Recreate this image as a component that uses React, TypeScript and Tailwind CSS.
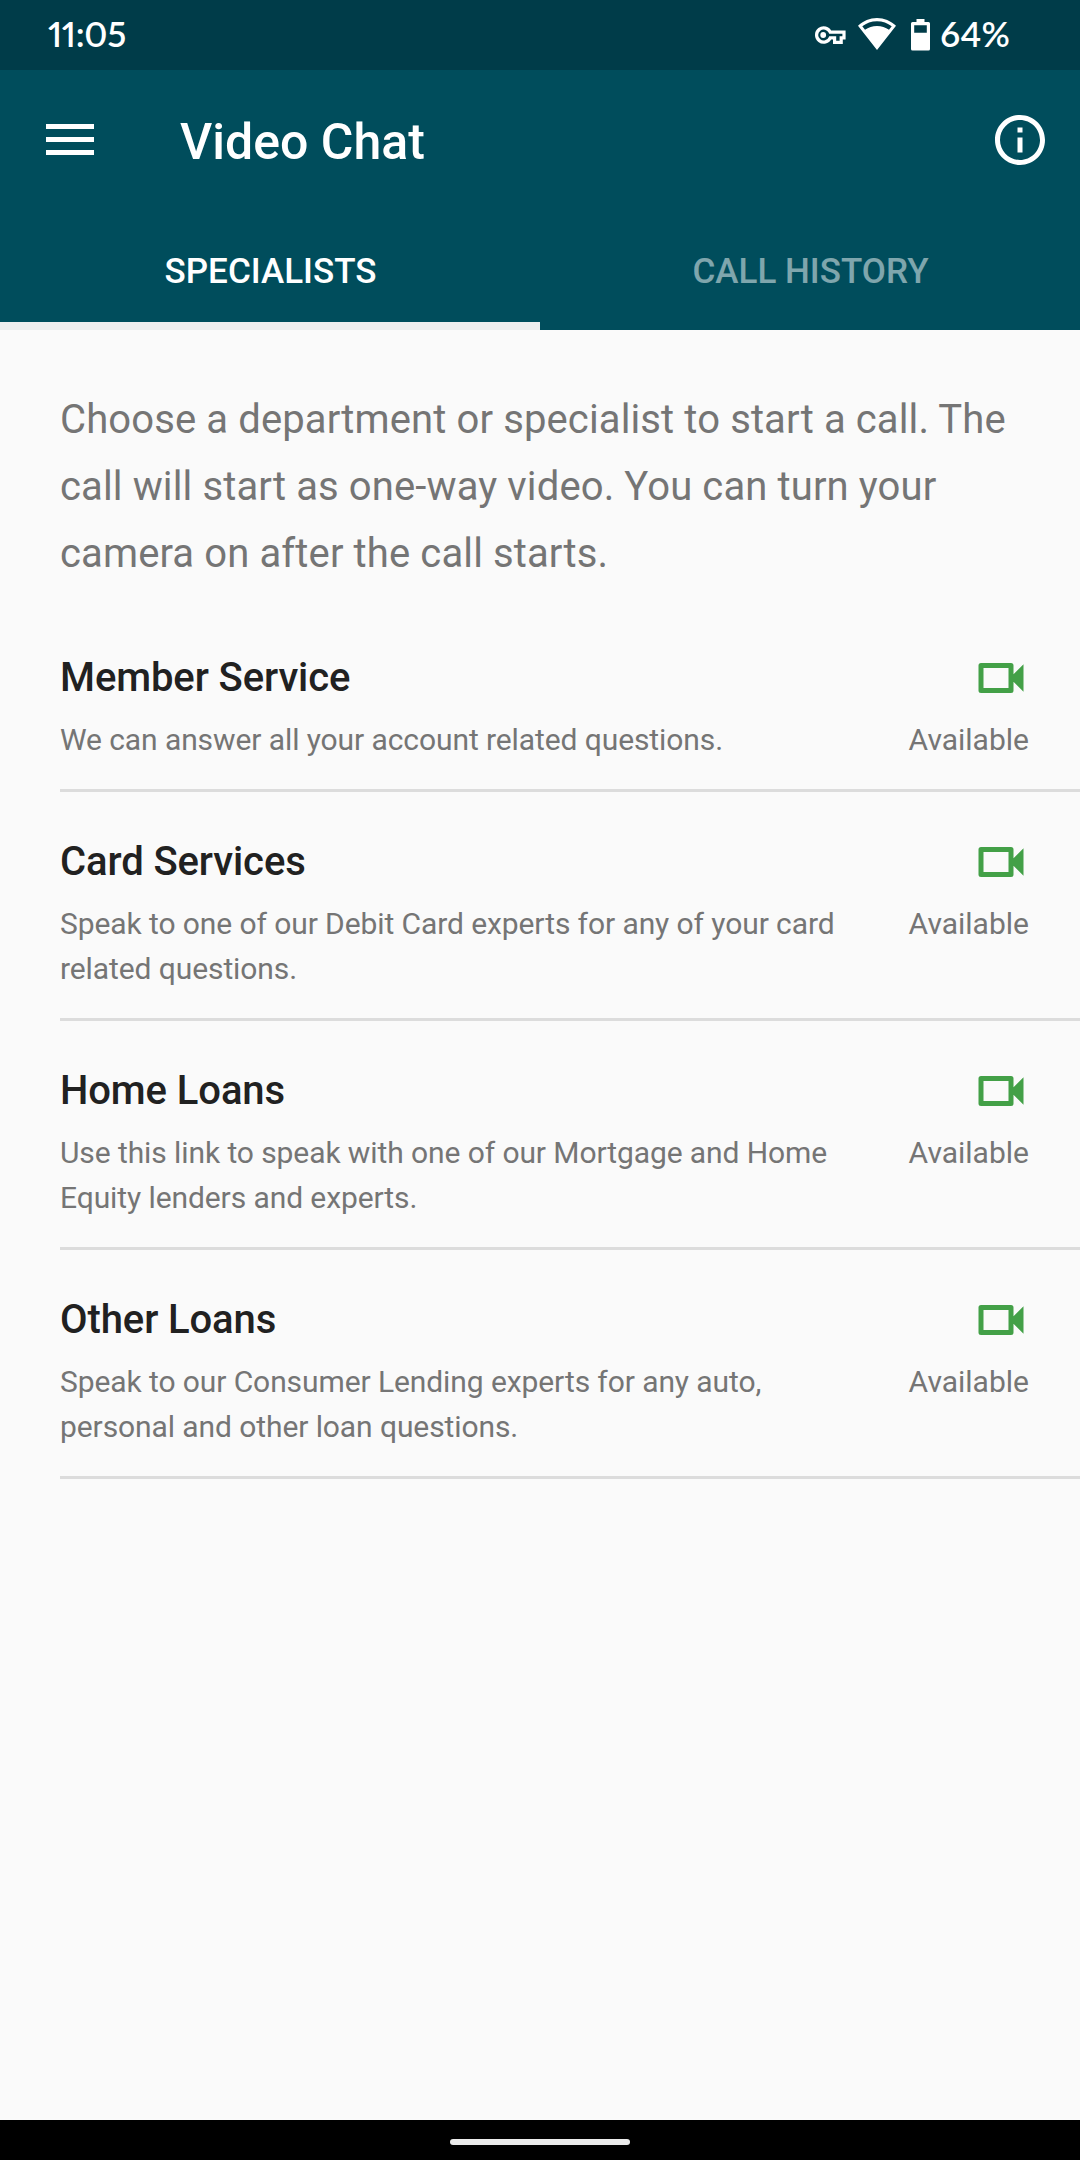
// src/App.tsx
import { useState } from 'react';

const specialists = [
  {
    name: 'Member Service',
    description: 'We can answer all your account related questions.',
    status: 'Available',
  },
  {
    name: 'Card Services',
    description: 'Speak to one of our Debit Card experts for any of your card related questions.',
    status: 'Available',
  },
  {
    name: 'Home Loans',
    description: 'Use this link to speak with one of our Mortgage and Home Equity lenders and experts.',
    status: 'Available',
  },
  {
    name: 'Other Loans',
    description: 'Speak to our Consumer Lending experts for any auto, personal and other loan questions.',
    status: 'Available',
  },
];

const tabs = ['Specialists', 'Call History'];

const StatusBar = () => (
  <div className="flex h-[70px] shrink-0 items-center justify-between bg-[#003c49] pl-[48px] pr-[69px] font-['Lato','Roboto',sans-serif] text-[35px] font-semibold leading-[66px] text-white">
    <span className="h-[70px] proportional-nums tracking-[-0.3px]">11:05</span>
    <div className="flex items-center">
      {/* VPN key */}
      <svg className="mr-[12px] h-[20px] w-[32px]" viewBox="0 0 32 20" fill="none" stroke="currentColor">
        <path
          d="M16.2 7.2A7.1 7.1 0 1 0 16.2 12.8H20.6V17.4H27.2V12.8H30V7.2Z"
          strokeWidth="3.2"
        />
        <circle cx="9.2" cy="10" r="2.9" fill="currentColor" stroke="none" />
      </svg>
      {/* Wifi */}
      <svg className="mb-[2px] mr-[15px] h-[32px] w-[38px]" viewBox="0 0 38 32" fill="currentColor">
        <path
          fillRule="evenodd"
          d="M19 0C11.8 0 5.2 2.9 0 7.8L19 32L38 7.8C32.8 2.9 26.2 0 19 0ZM19 3.2C24.6 3.2 29.6 5.1 33.7 8.3L31 11.7C27.6 9.3 23.5 7.9 19 7.9C14.5 7.9 10.4 9.3 7 11.7L4.3 8.3C8.4 5.1 13.4 3.2 19 3.2Z"
        />
      </svg>
      {/* Battery */}
      <svg className="mr-[10px] h-[32px] w-[19px]" viewBox="0 0 19 32" fill="currentColor">
        <path
          fillRule="evenodd"
          d="M5.5 0H13.5V3H17.5Q19 3 19 4.5V30Q19 31.5 17.5 31.5H1.5Q0 31.5 0 30V4.5Q0 3 1.5 3H5.5ZM3.2 6.2V13.7H15.8V6.2Z"
        />
      </svg>
      <span className="h-[70px] w-[71px] whitespace-nowrap tracking-[0.5px]">64%</span>
    </div>
  </div>
);

const VideoIcon = () => (
  <svg className="-mr-[1.5px] h-[60px] w-[60px] text-[#43a047]" viewBox="0 0 24 24" fill="currentColor">
    <path d="M15,8V16H5V8H15M16,6H4A1,1 0 0,0 3,7V17A1,1 0 0,0 4,18H16A1,1 0 0,0 17,17V13.5L21,17.5V6.5L17,10.5V7A1,1 0 0,0 16,6Z" />
  </svg>
);

const App = () => {
  const [activeTab, setActiveTab] = useState('Specialists');

  return (
    <div className="flex h-[2160px] w-[1080px] flex-col overflow-hidden bg-[#fafafa] font-['Roboto',sans-serif]">
      <StatusBar />

      {/* App bar */}
      <header className="shrink-0 bg-[#004d5c] text-white">
        <div className="flex h-[140px] items-center pl-[46px] pr-[30px]">
          <button aria-label="Menu" className="mb-px flex w-[48px] flex-col gap-[8px]">
            <span className="h-[5px] bg-white" />
            <span className="h-[5px] bg-white" />
            <span className="h-[5px] bg-white" />
          </button>
          <h1 className="ml-[86px] mt-[4px] flex-1 text-[50px] font-medium leading-[60px]">Video Chat</h1>
          <button aria-label="Info">
            <svg className="h-[60px] w-[60px]" viewBox="0 0 24 24" fill="currentColor">
              <path d="M11 7h2v2h-2zm0 4h2v6h-2zm1-9C6.48 2 2 6.48 2 12s4.48 10 10 10 10-4.48 10-10S17.52 2 12 2zm0 18c-4.41 0-8-3.59-8-8s3.59-8 8-8 8 3.59 8 8-3.59 8-8 8z" />
            </svg>
          </button>
        </div>

        <nav className="grid h-[120px] grid-cols-2">
          {tabs.map(tab => (
            <button
              key={tab}
              onClick={() => setActiveTab(tab)}
              className={`border-b-8 pl-px pt-[13px] text-[35px] font-medium uppercase ${
                activeTab === tab ? 'border-[#eeeeee] text-white' : 'border-transparent text-white/50'
              }`}
            >
              {tab}
            </button>
          ))}
        </nav>
      </header>

      <main className="flex-1">
        <p className="px-[60px] pt-[56px] text-[40px] leading-[67px] tracking-[0.12px] text-[#757575]">
          Choose a department or specialist to start a call. The call will start as one-way video. You can turn your
          camera on after the call starts.
        </p>

        <ul className="pl-[60px] pt-[21px]">
          {specialists.map(item => (
            <li key={item.name} className="flex justify-between border-b-[3px] border-[#dcdcdc] pb-[27px] pr-[51px] pt-[40px]">
              <div className="w-[800px]">
                <h2 className="text-[40px] font-medium leading-[60px] tracking-[-0.1px] text-[#212121]">{item.name}</h2>
                <p className="mt-[9px] text-[30px] leading-[45px] tracking-[-0.09px] text-[#757575]">{item.description}</p>
              </div>
              <div className="flex flex-col items-end">
                <VideoIcon />
                <span className="mt-[9px] text-[30px] leading-[45px] text-[#757575]">{item.status}</span>
              </div>
            </li>
          ))}
        </ul>
      </main>

      {/* Gesture bar */}
      <div className="flex h-[40px] shrink-0 justify-center bg-black pt-[19px]">
        <div className="h-[6px] w-[180px] rounded-full bg-[#ebebeb]" />
      </div>
    </div>
  );
};

export default App;
